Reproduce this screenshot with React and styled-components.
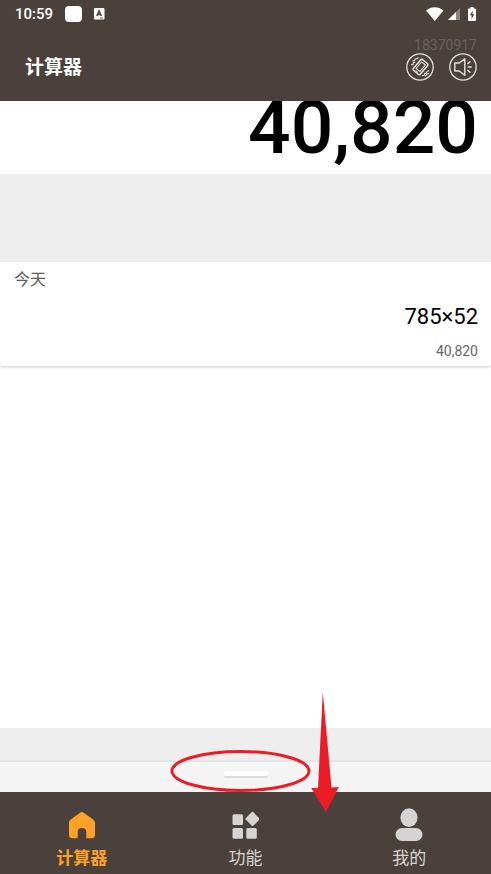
import React, { useState } from "react";

import styled, { createGlobalStyle, ThemeProvider } from "styled-components";

const theme = {
  bar: "#4b413c",
  accent: "#ffa127",
  muted: "#d4d4d4",
  page: "#eeeeee",
  marker: "#ed1c24",
};

const GlobalStyle = createGlobalStyle`
  * {
    box-sizing: border-box;
  }
  body {
    margin: 0;
    font-family: Roboto, "Noto Sans CJK SC", sans-serif;
    background-color: ${theme.page};
  }
  h1, h2, p {
    margin: 0;
    font-weight: 400;
  }
`;

const Screen = styled.div`
  position: relative;
  display: flex;
  flex-direction: column;
  min-height: 100vh;
`;

const Header = styled.header`
  padding-bottom: 20px;
  color: white;
  background-color: ${(props) => props.theme.bar};
`;

const StatusBar = styled.div`
  display: flex;
  align-items: center;
  justify-content: space-between;
  height: 28px;
  padding: 0 15px;
`;

const StatusGroup = styled.div`
  display: flex;
  align-items: center;
  gap: ${(props) => props.$gap};
`;

const Clock = styled.span`
  font-size: 15px;
  font-weight: 500;
  line-height: 28px;
`;

const TitleRow = styled.div`
  display: flex;
  align-items: flex-end;
  justify-content: space-between;
  height: 53px;
  padding: 0 14px 0 25px;
`;

const Title = styled.h1`
  font-size: 19px;
  font-weight: 700;
  line-height: 26px;
`;

const Tools = styled.div`
  display: flex;
  flex-direction: column;
  align-items: flex-end;
`;

const SerialNumber = styled.span`
  color: #66615e;
  font-size: 14px;
  line-height: 16px;
`;

const ToolButtons = styled.div`
  display: flex;
  gap: 15px;
`;

const ToolButton = styled.button`
  display: flex;
  padding: 0;
  border: 0;
  background-color: transparent;
  cursor: pointer;
`;

const Result = styled.div`
  display: flex;
  align-items: flex-end;
  justify-content: flex-end;
  height: 73px;
  padding: 0 13px;
  overflow: hidden;
  background-color: white;
  color: black;
  font-size: 75px;
  font-weight: 500;
  line-height: 94px;
`;

const Spacer = styled.div`
  height: ${(props) => props.$height};
`;

const History = styled.main`
  flex: 1;
  background-color: white;
`;

const HistoryCard = styled.section`
  height: 104px;
  padding: 5px 13px 5px 14px;
  border-radius: 3px;
  background-color: white;
  box-shadow: 0 2px 2px rgba(0, 0, 0, 0.12);
`;

const DayLabel = styled.h2`
  color: #606060;
  font-size: 16px;
  line-height: 26px;
`;

const Expression = styled.p`
  padding-top: 10px;
  color: black;
  font-size: 22px;
  line-height: 28px;
  text-align: right;
`;

const Answer = styled.p`
  padding-top: 10px;
  color: #666666;
  font-size: 14px;
  line-height: 20px;
  text-align: right;
`;

const HandleBar = styled.button`
  display: flex;
  justify-content: center;
  width: 100%;
  height: 32px;
  padding: 9px 0 0;
  border: 0;
  border-top: 2px solid #e4e4e4;
  background-color: #f4f4f4;
`;

const Handle = styled.span`
  width: 44px;
  height: 5px;
  border-radius: 2px;
  background-color: white;
  box-shadow: 0 2px 1px rgba(0, 0, 0, 0.1);
`;

const NavBar = styled.nav`
  display: grid;
  grid-template-columns: repeat(3, 1fr);
  height: 82px;
  background-color: ${(props) => props.theme.bar};
`;

const NavItem = styled.button`
  display: flex;
  flex-direction: column;
  align-items: center;
  gap: 4px;
  padding: 15px 0 0;
  border: 0;
  background-color: transparent;
  color: ${(props) => (props.$active ? props.theme.accent : props.theme.muted)};
  font-family: inherit;
  font-size: 17px;
  font-weight: ${(props) => (props.$active ? 700 : 400)};
  line-height: 26px;
  cursor: pointer;
`;

const Marker = styled.svg`
  position: absolute;
  bottom: 0;
  left: calc(50% - 81px);
  pointer-events: none;
`;

function AppBadge() {
  return (
    <svg width="11" height="12" viewBox="0 0 11 12">
      <rect width="10.5" height="11.5" rx="1" fill="white" />
      <path d="M2.8 8 L5.1 2.8 L7.4 8 M3.8 6.4 H6.4" fill="none" stroke="#4b413c" strokeWidth="1.5" />
      <path d="M6 10 H9" stroke="#4b413c" strokeWidth="0.8" />
    </svg>
  );
}

function WifiIcon() {
  return (
    <svg width="18" height="14" viewBox="0 0 18 14">
      <path d="M0 3.6 C5 -0.9 12.5 -0.9 17.5 3.6 L8.8 14 Z" fill="white" />
    </svg>
  );
}

function SignalIcon() {
  return (
    <svg width="12" height="12" viewBox="0 0 12 12">
      <path d="M0 12 L12 0 V12 Z" fill="#8b8581" />
      <path d="M0 12 L8 4 V12 Z" fill="white" />
    </svg>
  );
}

function BatteryIcon() {
  return (
    <svg width="8" height="14" viewBox="0 0 8 14">
      <path d="M2.3 0 H5.7 V1.5 H7 Q8 1.5 8 2.5 V13 Q8 14 7 14 H1 Q0 14 0 13 V2.5 Q0 1.5 1 1.5 H2.3 Z" fill="white" />
      <path d="M4.6 3.8 L1.9 8.2 H3.6 V12 L6.2 7.3 H4.6 Z" fill="#4b413c" />
    </svg>
  );
}

function VibrateIcon() {
  return (
    <svg width="28" height="28" viewBox="0 0 28 28" fill="none" stroke="#e4e1df" strokeWidth="1.2" strokeLinecap="round" strokeLinejoin="round">
      <circle cx="14" cy="14" r="13.2" strokeWidth="1.3" />
      <g transform="rotate(40 14.5 14)">
        <rect x="10" y="7" width="9" height="14" rx="1.2" strokeWidth="1.5" />
        <path d="M12 9.3 H17 V18 H12 Z M13.5 20 H15.5" strokeWidth="1" />
      </g>
      <path d="M5.5 11.6 L6.9 11.8 L7.4 9.6 L8.9 9.3 M6.8 8 L8.4 7.6 L9.2 5.9 L11 5.7 L12.2 4.8 M16.5 22.6 L18.2 22.2 L18.8 20.4 L20.4 20.2 L21 18.4 L22.6 17.8 M19.4 23 L21 21.2 L22.6 20.6" strokeWidth="1.1" />
    </svg>
  );
}

function SpeakerIcon() {
  return (
    <svg width="28" height="28" viewBox="0 0 28 28" fill="none" stroke="#e4e1df" strokeWidth="1.4" strokeLinecap="round" strokeLinejoin="round">
      <circle cx="14" cy="14" r="13.2" strokeWidth="1.3" />
      <path d="M5.8 10 H10.2 L15.8 5.8 V22.2 L10.2 18 H5.8 Z" />
      <path d="M18.8 10.6 L21 8.8 M19.2 14 H22.2 M18.8 17.4 L21 19.2" />
    </svg>
  );
}

function HomeIcon() {
  return (
    <svg width="28" height="34" viewBox="0 0 28 34" fill="currentColor">
      <path d="M12.3 5.4 Q14 4.4 15.4 5.4 L25.2 12.4 Q27 13.8 27 16 V27.8 Q27 31.2 23.5 31.2 H18.3 V25 Q18.3 21 14 21 Q9.7 21 9.7 25 V31.2 H4.5 Q1 31.2 1 27.8 V16 Q1 13.8 2.8 12.4 Z" />
    </svg>
  );
}

function GridIcon() {
  return (
    <svg width="28" height="34" viewBox="0 0 28 34" fill="currentColor">
      <rect x="1.5" y="7.3" width="10.5" height="10.7" rx="1.5" />
      <rect x="1.5" y="21" width="10.5" height="10.7" rx="1.5" />
      <rect x="15.3" y="21" width="10.5" height="10.7" rx="1.5" />
      <rect x="16.2" y="6.6" width="10.6" height="10.6" rx="1" transform="rotate(45 21.5 11.9)" />
    </svg>
  );
}

function PersonIcon() {
  return (
    <svg width="28" height="34" viewBox="0 0 28 34" fill="currentColor">
      <ellipse cx="14" cy="10.6" rx="8.6" ry="9.4" />
      <rect x="0.5" y="21" width="27" height="13" rx="6.5" />
    </svg>
  );
}

const tabs = [
  { name: "计算器", Icon: HomeIcon },
  { name: "功能", Icon: GridIcon },
  { name: "我的", Icon: PersonIcon },
];

const history = [{ day: "今天", expression: "785×52", answer: "40,820" }];

export default function App() {
  const [activeTab, setActiveTab] = useState("计算器");

  return (
    <ThemeProvider theme={theme}>
      <GlobalStyle />
      <Screen>
        <Header>
          <StatusBar>
            <StatusGroup $gap="12px">
              <Clock>10:59</Clock>
              <svg width="17" height="16" viewBox="0 0 17 16">
                <rect width="17" height="16" rx="4" fill="white" />
              </svg>
              <AppBadge />
            </StatusGroup>
            <StatusGroup $gap="4px">
              <WifiIcon />
              <SignalIcon />
              <Spacer $height="14px" />
              <BatteryIcon />
            </StatusGroup>
          </StatusBar>
          <TitleRow>
            <Title>计算器</Title>
            <Tools>
              <SerialNumber>18370917</SerialNumber>
              <ToolButtons>
                <ToolButton type="button" aria-label="振动">
                  <VibrateIcon />
                </ToolButton>
                <ToolButton type="button" aria-label="声音">
                  <SpeakerIcon />
                </ToolButton>
              </ToolButtons>
            </Tools>
          </TitleRow>
        </Header>
        <Result>40,820</Result>
        <Spacer $height="88px" />
        <History>
          {history.map((item) => (
            <HistoryCard key={item.expression}>
              <DayLabel>{item.day}</DayLabel>
              <Expression>{item.expression}</Expression>
              <Answer>{item.answer}</Answer>
            </HistoryCard>
          ))}
        </History>
        <Spacer $height="32px" />
        <HandleBar type="button" aria-label="展开键盘">
          <Handle />
        </HandleBar>
        <NavBar>
          {tabs.map(({ name, Icon }) => (
            <NavItem
              key={name}
              type="button"
              $active={name === activeTab}
              onClick={() => setActiveTab(name)}
            >
              <Icon />
              {name}
            </NavItem>
          ))}
        </NavBar>
        <Marker width="180" height="184" viewBox="0 0 180 184">
          <ellipse cx="75.5" cy="81" rx="68.5" ry="19.5" fill="none" stroke={theme.marker} strokeWidth="3" />
          <path d="M157.8 2 L166.5 97.5 L173.8 97 L161 122 L146.3 98 L153 98 Z" fill={theme.marker} />
        </Marker>
      </Screen>
    </ThemeProvider>
  );
}
